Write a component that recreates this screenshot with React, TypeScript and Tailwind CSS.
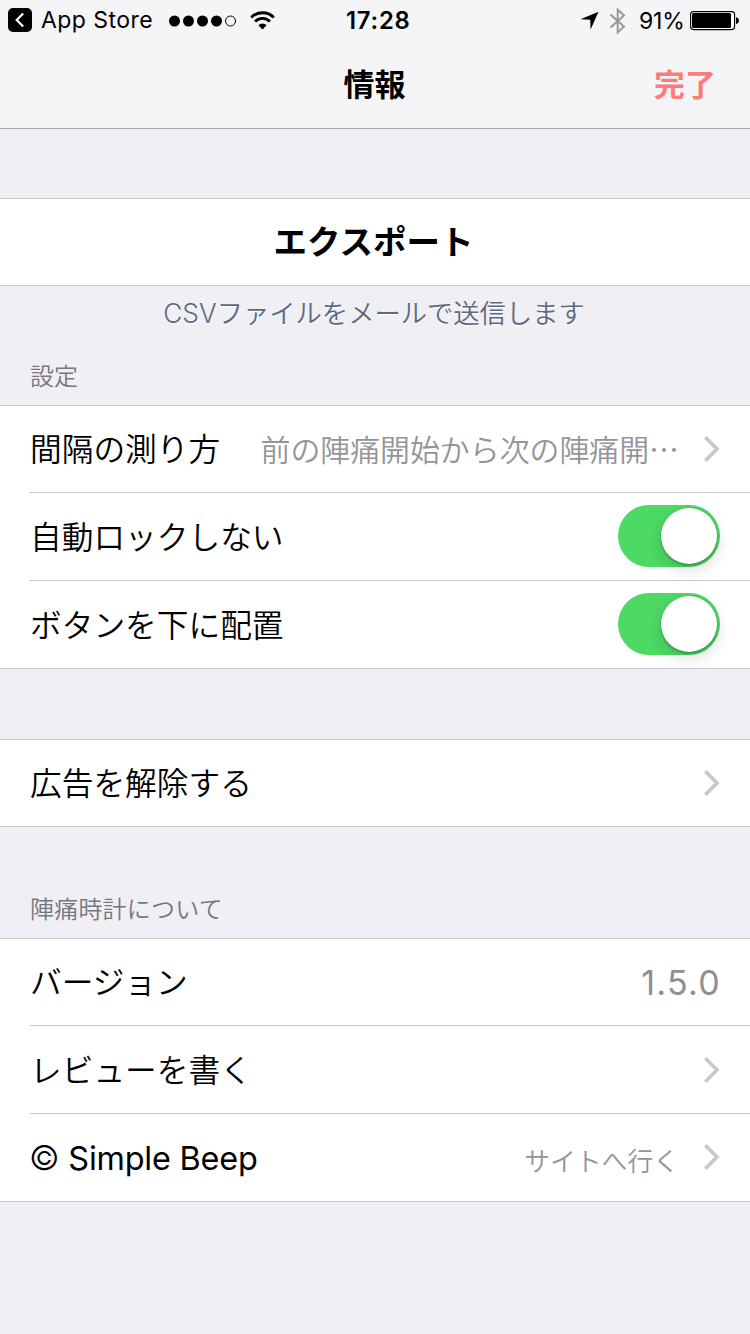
import type { ReactNode } from 'react'

function StatusBar() {
  return (
    <div className="flex h-10 items-center font-['Inter',sans-serif] text-black">
      <div className="ml-2 flex size-6 items-center justify-center rounded-[5px] bg-black">
        <svg width="12" height="16" viewBox="0 0 12 16" fill="none" stroke="#fff" strokeWidth="2.2">
          <path d="M9.2 1.5 2.7 8l6.5 6.5" />
        </svg>
      </div>
      <span className="ml-[9px] w-[112px] whitespace-nowrap pt-px text-[23px] leading-none tracking-[0.45px]">App Store</span>
      <svg className="ml-[16px] mt-px" width="68" height="12" viewBox="0 0 68 12">
        <circle cx="5.5" cy="6" r="5.5" />
        <circle cx="19.5" cy="6" r="5.5" />
        <circle cx="33.5" cy="6" r="5.5" />
        <circle cx="47.5" cy="6" r="5.5" />
        <circle cx="61.5" cy="6" r="5" fill="none" stroke="#000" />
      </svg>
      <svg className="ml-[13px]" width="25" height="19" viewBox="0 0 25 19" fill="none" stroke="#000" strokeWidth="2.8">
        <path d="M1.2 6.4a16 16 0 0 1 22.6 0" />
        <path d="M5.1 10.5a10.5 10.5 0 0 1 14.8 0" />
        <path d="M12.5 18.6 8.4 14.3a5.8 5.8 0 0 1 8.2 0Z" fill="#000" stroke="none" />
      </svg>
      <span className="ml-[71px] w-[66px] whitespace-nowrap pt-[2px] text-[23.8px] font-semibold leading-none tracking-[0.8px]">17:28</span>
      <svg className="ml-[168px]" width="19" height="19" viewBox="0 0 19 19">
        <path d="M18.5.8 10.6 18.5 10.2 8.8.5 8.2Z" />
      </svg>
      <svg className="ml-[10px] mt-px" width="17" height="28" viewBox="0 0 17 28" fill="none" stroke="#999" strokeWidth="2">
        <path d="M1.5 7.5 15 19.5 8.7 25.5V2.5L15 8.5 1.5 20.5" />
      </svg>
      <span className="ml-[13px] w-[46px] whitespace-nowrap pt-[2px] text-[23px] leading-none tracking-[-0.2px]">91%</span>
      <svg className="ml-[5px] mt-[2px]" width="50" height="20" viewBox="0 0 50 20">
        <rect x="0.6" y="0.6" width="44" height="18" rx="3" fill="#fff" stroke="#000" strokeWidth="1.1" />
        <rect x="2" y="2" width="39" height="15" rx="1.5" />
        <path d="M46 6.2c4 1 4 5.8 0 6.8Z" />
      </svg>
    </div>
  )
}

function Group({ children }: { children: ReactNode }) {
  return <div className="border-y border-[#c8c7cc] bg-white">{children}</div>
}

function Row({ label, first, children }: { label: ReactNode; first?: boolean; children?: ReactNode }) {
  return (
    <div className="pl-[30px]">
      <div className={`flex items-center justify-between pr-[30px] ${first ? 'h-[86px]' : 'h-[88px] border-t border-[#c8c7cc]'}`}>
        <span className={`whitespace-nowrap text-[31.7px] leading-none ${first ? 'pt-px' : 'pt-[3px]'}`}>{label}</span>
        {children}
      </div>
    </div>
  )
}

function Chevron() {
  return (
    <svg className="ml-[24px] shrink-0" width="17" height="28" viewBox="0 0 17 28" fill="none" stroke="#c7c7cc" strokeWidth="3.6">
      <path d="M2.3 2.3 14 14 2.3 25.7" />
    </svg>
  )
}

function Toggle() {
  return (
    <div className="mb-px flex h-[62px] w-[102px] items-center justify-end rounded-full bg-[#4cd964] pr-[3px]">
      <div className="size-[56px] rounded-full bg-white shadow-[0_6px_16px_rgba(0,0,0,0.15),0_2px_2px_rgba(0,0,0,0.18),0_0_2px_rgba(0,0,0,0.15)]" />
    </div>
  )
}

export default function App() {
  return (
    <main className="h-[1334px] w-[750px] overflow-hidden bg-[#efeff4] font-['Inter','Noto_Sans_CJK_JP',sans-serif] font-[350] text-black">
      <header className="h-[129px] border-b border-[#a7a7aa] bg-[#f5f5f7] font-normal">
        <StatusBar />
        <div className="grid h-[88px] grid-cols-3 items-center pr-[35px]">
          <span />
          <h1 className="pl-[34px] text-center text-[31px] font-bold leading-none">情報</h1>
          <button className="-mr-px text-right text-[31px] font-bold leading-none text-[#ff7b7b]">完了</button>
        </div>
      </header>

      <section className="pt-[69px]">
        <Group>
          <button className="flex h-[86px] w-full items-center justify-center pr-[3px] pt-[2px] text-[33.5px] font-bold leading-none">エクスポート</button>
        </Group>
        <p className="flex h-[56px] items-center justify-center pr-[2px] text-[26.3px] leading-none text-[#5d6980] [text-shadow:0_1px_0_#fff]">
          CSVファイルをメールで送信します
        </p>
      </section>

      <section>
        <h2 className="h-[63px] pl-[30px] pt-[23px] text-[24px] leading-none text-[#77777c]">設定</h2>
        <Group>
          <Row label="間隔の測り方" first>
            <div className="flex items-center">
              <span className="pt-[4px] text-[29.9px] leading-none text-[#949499]">前の陣痛開始から次の陣痛開⋯</span>
              <Chevron />
            </div>
          </Row>
          <Row label="自動ロックしない">
            <Toggle />
          </Row>
          <Row label="ボタンを下に配置">
            <Toggle />
          </Row>
        </Group>
      </section>

      <section className="pt-[70px]">
        <Group>
          <Row label="広告を解除する" first>
            <Chevron />
          </Row>
        </Group>
      </section>

      <section>
        <h2 className="h-[111px] pl-[30px] pt-[71px] text-[24px] leading-none tracking-[0.2px] text-[#77777c]">陣痛時計について</h2>
        <Group>
          <Row label="バージョン" first>
            <span className="-mr-px pt-[2px] text-[34px] font-normal leading-none tracking-[1.3px] text-[#8e8e93]">1.5.0</span>
          </Row>
          <Row label="レビューを書く">
            <Chevron />
          </Row>
          <Row
            label={
              <span className="-ml-px text-[32.4px] font-normal tracking-[-0.2px]">
                <span className="text-[33.5px] font-light">©</span> Simple Beep
              </span>
            }
          >
            <div className="flex items-center">
              <span className="pt-[9px] text-[25.8px] leading-none text-[#949499]">サイトへ行く</span>
              <Chevron />
            </div>
          </Row>
        </Group>
      </section>
    </main>
  )
}
